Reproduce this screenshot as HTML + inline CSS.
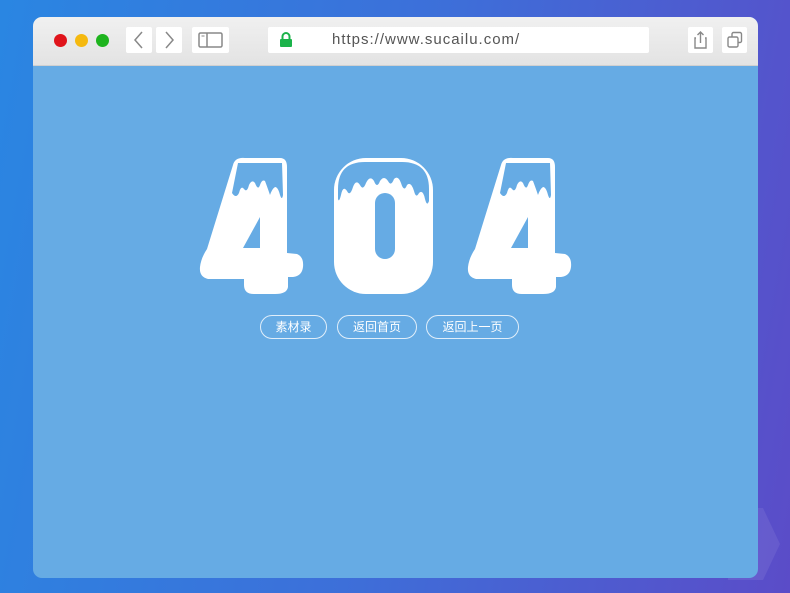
<!DOCTYPE html>
<html><head><meta charset="utf-8"><style>
*{margin:0;padding:0;box-sizing:border-box}
body{width:790px;height:593px;overflow:hidden;background:linear-gradient(100deg,#2a86e2 0%,#3d6fd9 50%,#5b4cc8 100%);position:relative;font-family:"Liberation Sans","Noto Sans CJK SC",sans-serif}
.win{position:absolute;left:33px;top:17px;width:725px;height:561px;border-radius:9px;overflow:hidden;background:#66abe4}
.bar{position:absolute;left:0;top:0;width:725px;height:49px;background:linear-gradient(#f0f0f0,#e3e3e3);border-bottom:1px solid #d0d0d0}
.dot{position:absolute;top:17px;width:13px;height:13px;border-radius:50%}
.box{position:absolute;top:10px;height:26px;background:#fff;border-radius:2px}
.url{position:absolute;left:235px;top:10px;width:381px;height:26px;background:#fff;border-radius:2px;font-size:15px;color:#555;letter-spacing:1px;line-height:26px;padding-left:64px}
.btn{position:absolute;top:298px;height:24px;border:1px solid rgba(255,255,255,.8);border-radius:12px;color:#fff;font-size:12px;line-height:22px;text-align:center}
</style></head><body>
<svg style="position:absolute;left:728px;top:508px" width="55" height="72"><polygon points="0,0 35,0 52,36 35,72 0,72" fill="rgba(255,255,255,0.08)"/></svg>
<div class="win">
<div class="bar">
<div class="dot" style="left:21px;background:#e0141b"></div>
<div class="dot" style="left:42px;background:#f5b90f"></div>
<div class="dot" style="left:63px;background:#1eb41e"></div>
<div class="box" style="left:93px;width:26px"><svg width="26" height="26"><path d="M16 5 L9 13 L16 21" stroke="#888" stroke-width="1.5" fill="none"/></svg></div>
<div class="box" style="left:123px;width:26px"><svg width="26" height="26"><path d="M10 5 L17 13 L10 21" stroke="#888" stroke-width="1.5" fill="none"/></svg></div>
<div class="box" style="left:159px;width:37px"><svg width="37" height="26"><rect x="7" y="6" width="23" height="14" rx="1.5" stroke="#888" stroke-width="1.5" fill="none"/><line x1="15" y1="6" x2="15" y2="20" stroke="#888" stroke-width="1.5"/><line x1="9.5" y1="9" x2="12.5" y2="9" stroke="#888"/></svg></div>
<div class="url">https://www.sucailu.com/<svg style="position:absolute;left:11px;top:5px" width="14" height="16"><path d="M3.5 7 V4.5 a3.5 3.5 0 0 1 7 0 V7" stroke="#1bb34a" stroke-width="2" fill="none"/><rect x="1" y="7" width="12" height="8" rx="1" fill="#1bb34a"/></svg></div>
<div class="box" style="left:655px;width:25px"><svg width="25" height="26"><path d="M8 11 H7 V21 H18 V11 H17" stroke="#888" stroke-width="1.4" fill="none"/><path d="M12.5 16 V5 M9.5 8 L12.5 5 L15.5 8" stroke="#888" stroke-width="1.4" fill="none"/></svg></div>
<div class="box" style="left:689px;width:25px"><svg width="25" height="26"><rect x="6" y="10" width="10" height="10" rx="1.5" stroke="#888" stroke-width="1.4" fill="none"/><path d="M10 10 V7 a1.5 1.5 0 0 1 1.5 -1.5 H18 a1.5 1.5 0 0 1 1.5 1.5 V14 a1.5 1.5 0 0 1 -1.5 1.5 H16" stroke="#888" stroke-width="1.4" fill="none"/></svg></div>
</div>
<svg style="position:absolute;left:0;top:0" width="725" height="561">
<defs>
<g id="four">
<path d="M200 148 Q202 140 212 141 L247 141 Q254 141 254 150 L254 236 L264 237 Q271 240 270 250 Q269 259 260 260 L255 260 L255 270 Q254 277 242 277 L221 277 Q211 277 211 268 L211 262 L175 262 Q166 260 167 250 Q168 241 174 232 Z" fill="#fff"/>
<path d="M205 146 L249 146 L250 178 Q249 184 247 178 Q245 170 242 170 Q239 172 237 178 Q235 172 232 164 Q229 162 227 168 Q225 174 222 166 Q219 162 216 168 Q214 176 211 172 Q208 168 206 176 Q203 182 199 176 Z" fill="#66abe4"/>
<path d="M210 231 L227 200 L227 231 Z" fill="#66abe4"/>
</g>
</defs>
<use href="#four"/>
<use href="#four" transform="translate(268,0)"/>
<rect x="301" y="141" width="99" height="136" rx="32" fill="#fff"/>
<path d="M305 182 L305 172 Q305 145 332 145 L369 145 Q396 145 396 172 L396 184 Q394 190 392 182 Q390 172 386 176 Q383 182 381 174 Q378 164 374 168 Q371 176 368 166 Q365 158 361 162 Q358 170 355 164 Q351 158 347 164 Q344 172 341 164 Q337 158 333 166 Q330 174 327 168 Q323 162 320 170 Q317 180 314 174 Q310 168 308 178 Q306 186 305 182 Z" fill="#66abe4"/>
<rect x="342" y="176" width="20" height="66" rx="10" fill="#66abe4"/>
</svg>
<div class="btn" style="left:227px;width:67px">素材录</div>
<div class="btn" style="left:304px;width:80px">返回首页</div>
<div class="btn" style="left:393px;width:93px">返回上一页</div>
</div>
</body></html>
